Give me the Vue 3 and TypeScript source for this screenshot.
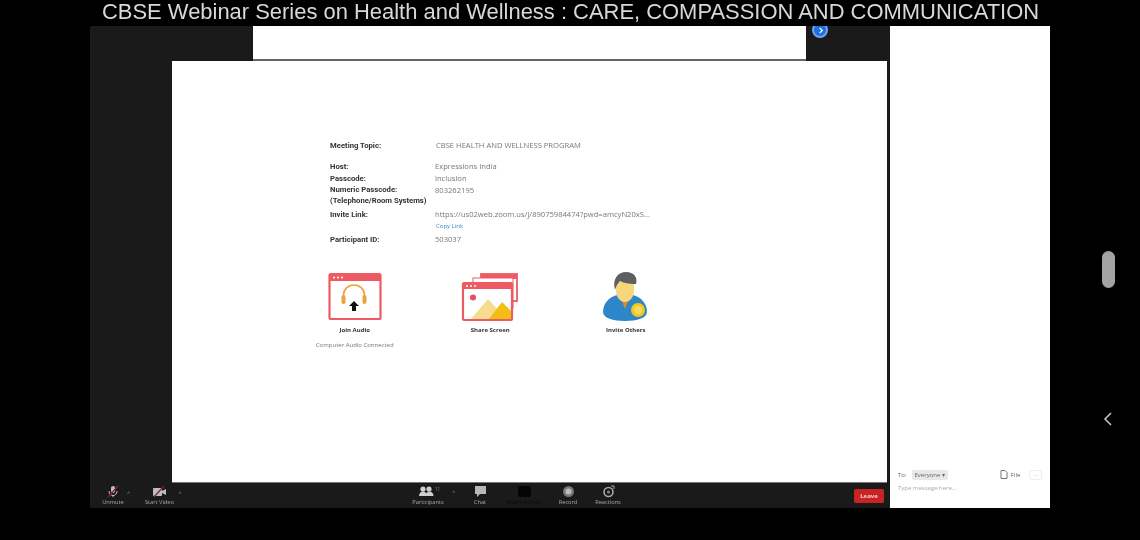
<script setup lang="ts">
interface InfoRow {
  label: string
  value: string
}

const topRows: InfoRow[] = [
  { label: 'Host:', value: 'Expressions India' },
  { label: 'Passcode:', value: 'inclusion' },
]

// slot widths keep the toolbar labels at their spots
const toolItems = [
  { name: 'Participants', width: 52 },
  { name: 'Chat', width: 52 },
  { name: 'Share Screen', width: 36 },
  { name: 'Record', width: 52 },
  { name: 'Reactions', width: 28 },
]
</script>

<template>
  <div class="screen">
    <div class="captionRow">
      <div class="caption">CBSE Webinar Series on Health and Wellness : CARE, COMPASSION AND COMMUNICATION</div>
    </div>

    <div class="frame">
      <div class="meeting">
        <div class="topStrip">
          <div class="thumb"></div>
          <div class="viewBtn">
            <svg width="7" height="7" viewBox="0 0 8 8"><path d="M3 1l3 3-3 3" fill="none" stroke="#fff" stroke-width="1.4" /></svg>
          </div>
        </div>

        <div class="slideRow">
          <div class="slide">
            <div class="info">
              <div class="row topic">
                <span class="label">Meeting Topic:</span>
                <span class="value topicValue">CBSE HEALTH AND WELLNESS PROGRAM</span>
              </div>
              <div class="row" v-for="row in topRows" :key="row.label">
                <span class="label">{{ row.label }}</span>
                <span class="value">{{ row.value }}</span>
              </div>
              <div class="row numeric">
                <span class="label">Numeric Passcode:<br />(Telephone/Room Systems)</span>
                <span class="value">803262195</span>
              </div>
              <div class="row invite">
                <span class="label">Invite Link:</span>
                <span class="value">
                  https://us02web.zoom.us/j/89075984474?pwd=amcyN20xS...
                  <span class="copy">Copy Link</span>
                </span>
              </div>
              <div class="row">
                <span class="label">Participant ID:</span>
                <span class="value">503037</span>
              </div>
            </div>

            <div class="actions">
              <div class="action">
                <svg class="icon" width="54" height="52" viewBox="0 0 54 52">
                  <rect x="1.500" y="3" width="51" height="45" fill="#fff" stroke="#ee5a63" stroke-width="2.200" rx="1.500" />
                  <rect x="1.500" y="3" width="51" height="7" fill="#ee5a63" />
                  <circle cx="6" cy="6.500" r="1" fill="#fff" />
                  <circle cx="10" cy="6.500" r="1" fill="#fff" />
                  <circle cx="14" cy="6.500" r="1" fill="#fff" />
                  <path d="M15.500 29v-5a10.500 10 0 0 1 21 0v5" fill="none" stroke="#eda23a" stroke-width="1.600" />
                  <rect x="13.500" y="24" width="4" height="9" rx="2" fill="#eda23a" />
                  <rect x="34.500" y="24" width="4" height="9" rx="2" fill="#eda23a" />
                  <path d="M26 30l-5 5h3v5h4v-5h3z" fill="#111" />
                </svg>
                <span class="actionLabel">Join Audio</span>
                <span class="status">Computer Audio Connected</span>
              </div>
              <div class="action">
                <svg class="icon" width="58" height="52" viewBox="0 0 58 52">
                  <rect x="20" y="3" width="36" height="27" fill="#fff" stroke="#ee5a63" stroke-width="1.800" />
                  <rect x="20" y="3" width="36" height="5" fill="#ee5a63" />
                  <rect x="12" y="7" width="40" height="30" fill="#fff" stroke="#ee5a63" stroke-width="1" />
                  <rect x="2" y="12" width="49" height="37" fill="#fff" stroke="#ee5a63" stroke-width="2.200" rx="1" />
                  <rect x="2" y="12" width="49" height="6" fill="#ee5a63" />
                  <circle cx="6" cy="15" r="1" fill="#fff" />
                  <circle cx="10" cy="15" r="1" fill="#fff" />
                  <circle cx="14" cy="15" r="1" fill="#fff" />
                  <circle cx="12" cy="26.500" r="3" fill="#e8505b" />
                  <path d="M10 48l17-20 13 14v6z" fill="#f7dc8e" />
                  <path d="M28 48l13-17 9 9v8z" fill="#f3bd16" />
                </svg>
                <span class="actionLabel">Share Screen</span>
              </div>
              <div class="action">
                <svg class="icon" width="50" height="52" viewBox="0 0 50 52">
                  <path d="M2 41c0-10 8-18 22-18s22 8 22 18c0 6-10 9-22 9S2 47 2 41z" fill="#2c86c8" />
                  <path d="M19 25l5 13 5-13z" fill="#e08a2c" />
                  <path d="M15 11h18v9c0 6-4 11-9 11s-9-5-9-11z" fill="#f6d77c" />
                  <path d="M14 19c-3-11 3-18 11-18s12 5 10 12c-7 0-13-1-16-3-2 2-4 5-5 9z" fill="#5e5f63" />
                  <circle cx="37" cy="39" r="7" fill="#f4c81f" />
                  <circle cx="37" cy="39" r="4" fill="#f7da5e" />
                </svg>
                <span class="actionLabel">Invite Others</span>
              </div>
            </div>
          </div>
        </div>

        <div class="toolbar">
          <div class="leftTools">
            <div class="tool unmute">
              <svg width="16" height="13" viewBox="0 0 16 13">
                <rect x="6" y="1" width="4" height="7" rx="2" fill="#bdbdbd" />
                <path d="M4 6c0 6 8 6 8 0M8 10v2" fill="none" stroke="#bdbdbd" />
                <path d="M3 12L13 1" stroke="#8a2030" stroke-width="1.200" />
              </svg>
              <span>Unmute</span>
            </div>
            <span class="caret">^</span>
            <div class="tool video">
              <svg width="16" height="13" viewBox="0 0 16 13">
                <rect x="2" y="3" width="9" height="8" rx="1" fill="#bdbdbd" />
                <path d="M11 6l4-2v6l-4-2z" fill="#bdbdbd" />
                <path d="M3 12L13 1" stroke="#8a2030" stroke-width="1.200" />
              </svg>
              <span>Start Video</span>
            </div>
            <span class="caret videoCaret">^</span>
          </div>

          <div class="midTools">
            <div
              class="tool"
              v-for="item in toolItems"
              :key="item.name"
              :class="{ share: item.name === 'Share Screen' }"
              :style="{ width: item.width + 'px' }"
            >
              <svg v-if="item.name === 'Participants'" width="26" height="13" viewBox="0 0 26 13">
                <circle cx="8" cy="4" r="2.600" fill="#cfcfcf" />
                <circle cx="14" cy="4" r="2.600" fill="#cfcfcf" />
                <path d="M4 11c0-6 8-6 8 0zM10.500 11c0-6 8-6 8 0z" fill="#cfcfcf" />
                <text x="20" y="6" class="count">11</text>
              </svg>
              <svg v-else-if="item.name === 'Chat'" width="13" height="13" viewBox="0 0 13 13">
                <path d="M1 1h11v8H6l-3 3V9H1z" fill="#b8b8b8" />
              </svg>
              <svg v-else-if="item.name === 'Share Screen'" width="15" height="13" viewBox="0 0 15 13">
                <rect x="1" y="1" width="13" height="11" rx="2" fill="#050505" />
              </svg>
              <svg v-else-if="item.name === 'Record'" width="13" height="13" viewBox="0 0 13 13">
                <circle cx="6.500" cy="6.500" r="5.500" fill="#777" />
                <circle cx="6.500" cy="6.500" r="3" fill="#bbb" />
              </svg>
              <svg v-else width="13" height="13" viewBox="0 0 13 13">
                <circle cx="6.500" cy="7" r="4.500" fill="none" stroke="#a8a8a8" stroke-width="1.600" />
                <circle cx="6.500" cy="7" r="1.500" fill="#888" />
                <path d="M9 1h3v3" fill="none" stroke="#aaa" />
              </svg>
              <span>{{ item.name }}</span>
            </div>
            <span class="caret partCaret">^</span>
          </div>

          <button class="leave">Leave</button>
        </div>
      </div>

      <aside class="chat">
        <div class="chatTo">
          <span>To:</span>
          <span class="everyone">Everyone ▾</span>
          <span class="file">
            <svg width="8" height="9" viewBox="0 0 8 9"><path d="M1 .500h4l2 2v6H1z" fill="none" stroke="#777" /></svg>
            File
          </span>
          <span class="more">···</span>
        </div>
        <div class="chatInput">Type message here...</div>
      </aside>
    </div>

    <div class="navPill"></div>
    <svg class="navBack" width="10" height="16" viewBox="0 0 10 16">
      <path d="M8 2L2 8l6 6" fill="none" stroke="#c8c8c8" stroke-width="1.500" />
    </svg>
  </div>
</template>

<style>
body {
  margin: 0;
  background: #000;
}
</style>

<style scoped>
.screen {
  position: relative;
  width: 1140px;
  height: 540px;
  background: #000;
  overflow: hidden;
  font-family: "Open Sans", sans-serif;
}

.captionRow {
  height: 26px;
  padding-left: 97px;
}

.caption {
  width: 943px;
  height: 26px;
  box-sizing: border-box;
  padding-left: 5px;
  background: #000;
  color: #d8d8d8;
  font-family: "Liberation Sans", sans-serif;
  font-size: 21.950px;
  line-height: 24px;
  white-space: nowrap;
  position: relative;
  z-index: 2;
  filter: blur(0.3px);
}

.frame {
  display: flex;
  width: 960px;
  height: 482px;
  margin-left: 90px;
}

.meeting {
  position: relative;
  width: 800px;
  display: flex;
  flex-direction: column;
  background: #1a1a1a;
}

.topStrip {
  height: 35px;
  flex: none;
  padding-left: 163px;
}

.thumb {
  width: 553px;
  height: 35px;
  box-sizing: border-box;
  background: #fff;
  border-bottom: 2px solid #666;
}

.viewBtn {
  position: absolute;
  left: 722px;
  top: -4px;
  width: 16px;
  height: 16px;
  border-radius: 50%;
  background: #1f6fe0;
  border: 2px solid #6ea4f0;
  box-sizing: border-box;
  display: flex;
  align-items: center;
  justify-content: center;
}

.slideRow {
  flex: 1;
  padding-left: 82px;
  padding-right: 3px;
  min-height: 0;
}

.slide {
  height: 100%;
  box-sizing: border-box;
  background: #fff;
  border-bottom: 1px solid #777;
  padding: 79px 0 0 115px;
  filter: blur(0.5px);
}

.info {
  margin-left: 43px;
  font-size: 7.600px;
  color: #777;
}

.row {
  display: grid;
  grid-template-columns: 105px 1fr;
  line-height: 11px;
  margin-bottom: 1px;
  white-space: nowrap;
}

.label {
  font-family: Roboto, sans-serif;
  font-size: 7.700px;
  font-weight: 700;
  color: #333;
}

.topic {
  margin-bottom: 10px;
}

.topicValue {
  padding-left: 1px;
}

.numeric {
  line-height: 10.500px;
  margin-bottom: 3px;
}

.invite {
  margin-bottom: 3px;
}

.copy {
  display: block;
  font-size: 6px;
  line-height: 9px;
  margin-top: 2px;
  margin-left: 1px;
  color: #3f86c8;
}

.actions {
  display: flex;
  margin-top: 26px;
}

.action {
  width: 135.500px;
  display: flex;
  flex-direction: column;
  align-items: center;
}

.icon {
  height: 52px;
}

.actionLabel {
  margin-top: 2px;
  font-size: 6px;
  line-height: 10px;
  font-weight: 700;
  color: #333;
}

.status {
  margin-top: 5px;
  font-size: 6px;
  line-height: 10px;
  color: #777;
}

.toolbar {
  height: 25px;
  flex: none;
  display: flex;
  align-items: center;
  background: #1a1a1a;
  color: #a8a8a8;
  font-size: 5.700px;
  filter: blur(0.5px);
}

.tool {
  display: flex;
  flex-direction: column;
  align-items: center;
  line-height: 8px;
  white-space: nowrap;
}

.leftTools {
  display: flex;
  align-items: center;
  width: 312px;
  padding-left: 14px;
  box-sizing: border-box;
}

.unmute {
  width: 18px;
}

.video {
  width: 32px;
  margin-left: 13px;
}

.caret {
  font-size: 6px;
  margin: -6px 0 0 5px;
  color: #888;
}

.videoCaret {
  margin-left: 3px;
}

.midTools {
  position: relative;
  display: flex;
}

.share {
  color: #080808;
}

.count {
  font-size: 4.500px;
  fill: #888;
}

.partCaret {
  position: absolute;
  left: 50px;
  top: 3px;
  margin: 0;
}

.leave {
  margin-left: auto;
  margin-right: 6px;
  width: 30px;
  height: 14px;
  padding: 0;
  border: none;
  border-radius: 2px;
  background: #c92424;
  color: #f4d0d0;
  font-family: inherit;
  font-size: 6px;
  font-weight: 700;
}

.chat {
  width: 160px;
  display: flex;
  flex-direction: column;
  justify-content: flex-end;
  background: #fff;
  padding: 0 8px 14px;
  box-sizing: border-box;
  color: #666;
  font-size: 6px;
  filter: blur(0.4px);
}

.chatTo {
  display: flex;
  align-items: center;
  height: 13px;
}

.everyone {
  margin-left: 5px;
  padding: 1px 3px;
  background: #e8e8e8;
  border-radius: 2px;
}

.file {
  display: flex;
  align-items: center;
  gap: 3px;
  margin-left: auto;
}

.more {
  margin-left: 9px;
  padding: 0 3px;
  border: 1px solid #eee;
  border-radius: 3px;
  color: #aaa;
}

.chatInput {
  margin-top: 2px;
  line-height: 11px;
  color: #aaa;
}

.navPill {
  position: absolute;
  left: 1102px;
  top: 251px;
  width: 13px;
  height: 37px;
  border-radius: 7px;
  background: #a2a2a2;
}

.navBack {
  position: absolute;
  left: 1103px;
  top: 411px;
}
</style>
